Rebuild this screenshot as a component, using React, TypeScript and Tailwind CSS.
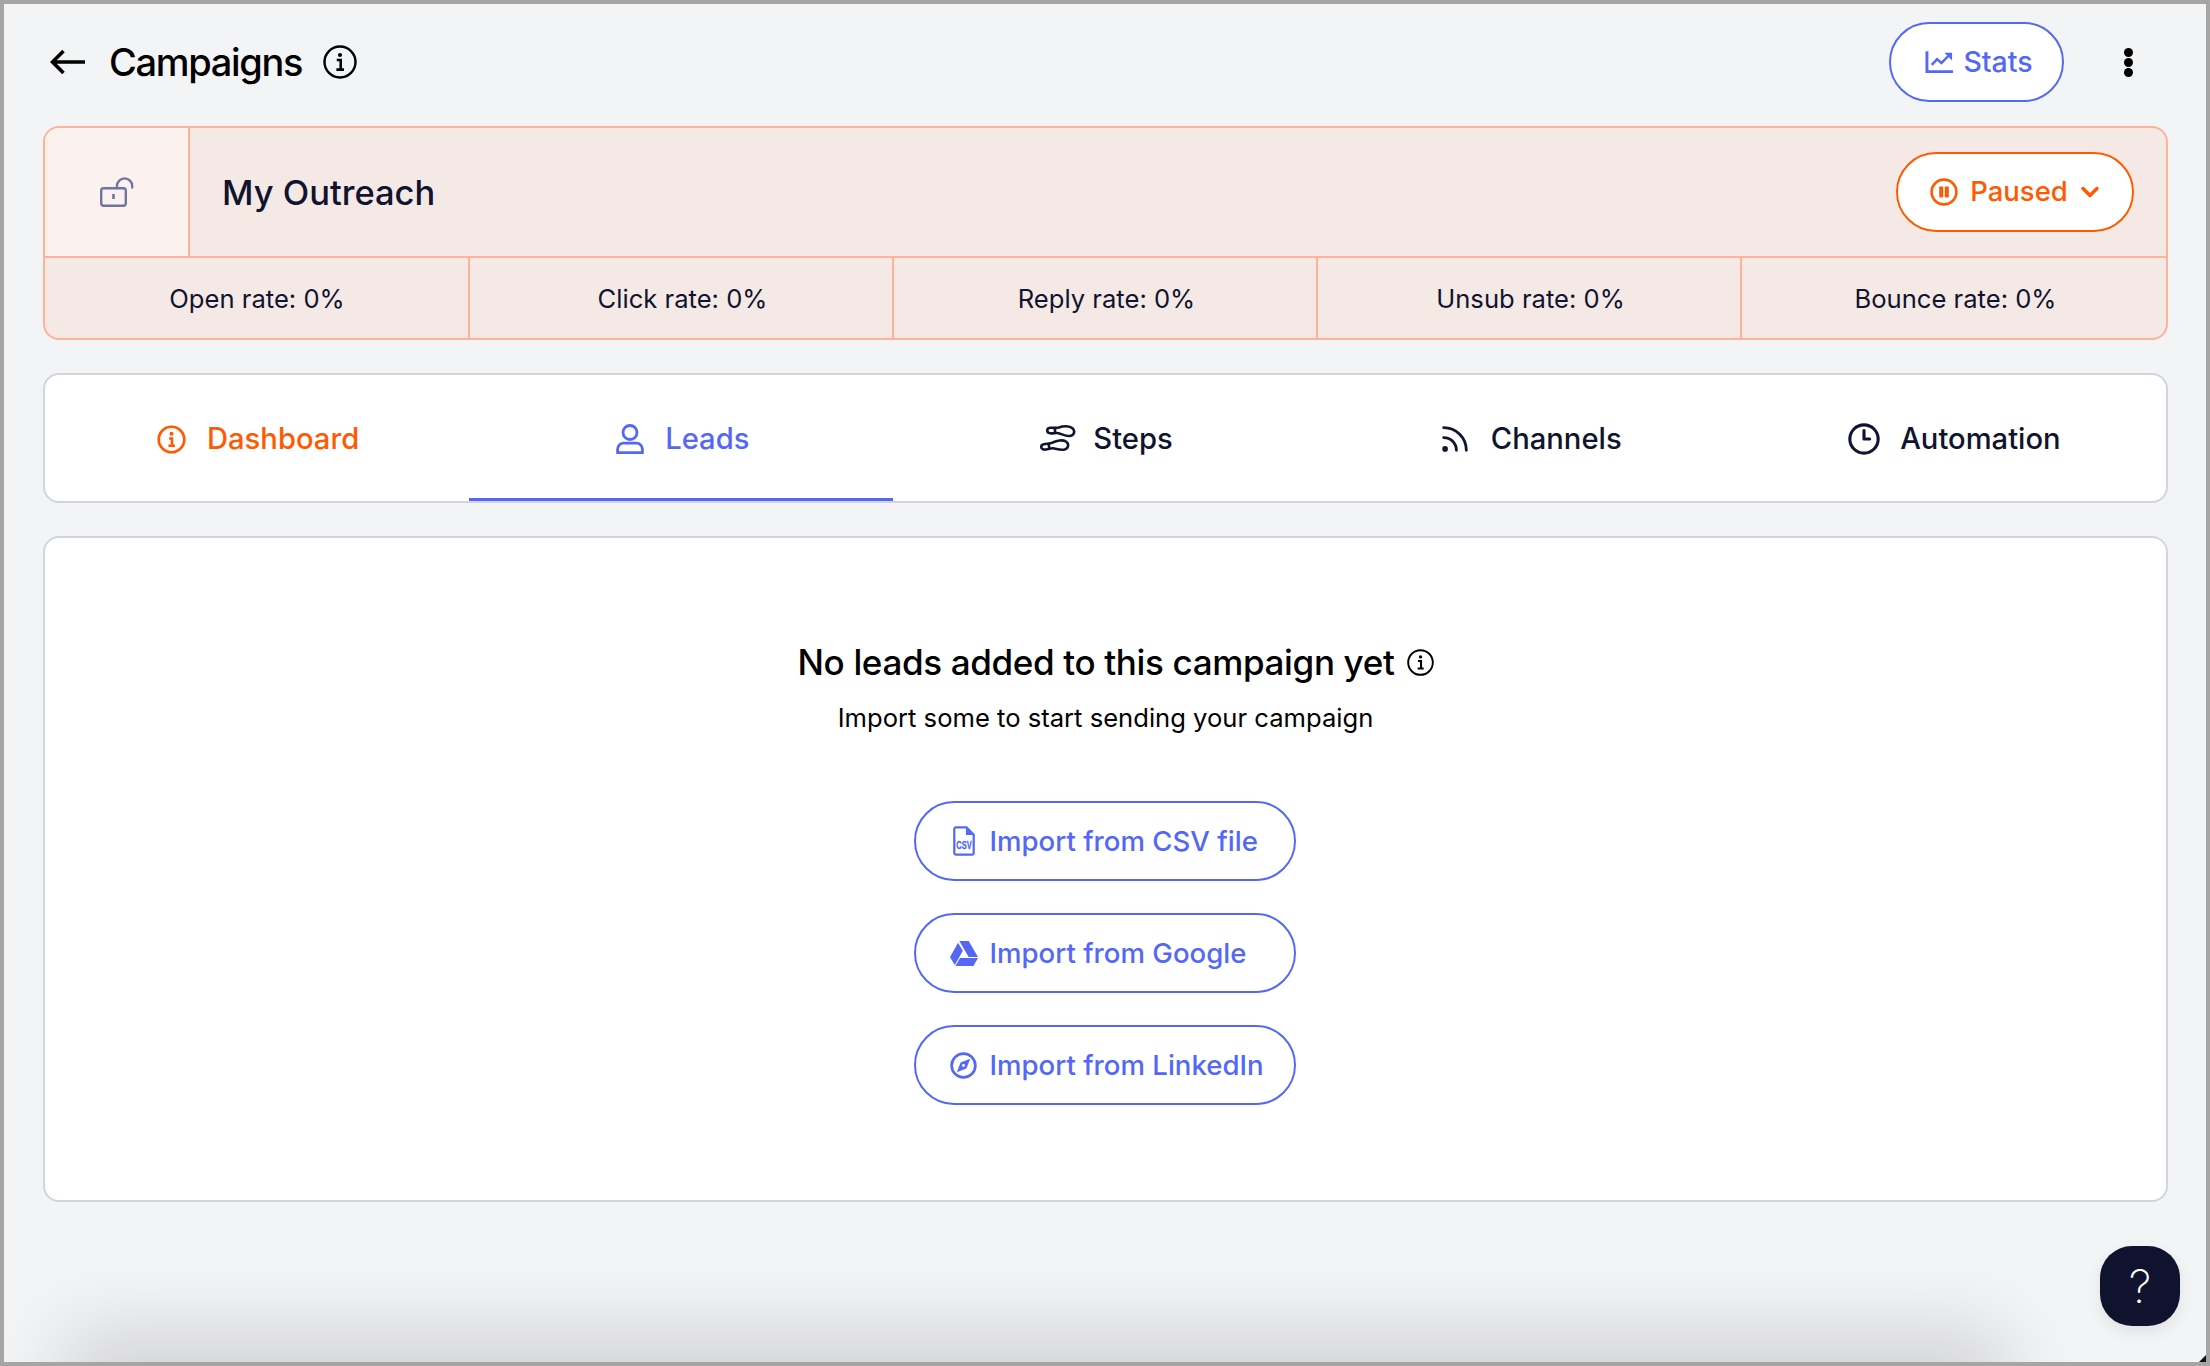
import { ChevronDown, Rss, Clock3 } from 'lucide-react';

function InfoSerif({ className }: { className?: string }) {
  return (
    <svg viewBox="0 0 34 34" fill="none" className={className}>
      <circle cx="17" cy="17" r="15.5" stroke="currentColor" strokeWidth="2.4" />
      <circle cx="17" cy="10" r="2.1" fill="currentColor" />
      <path d="M13.8 15h3.9v9.2M13.4 24.6h7.6" stroke="currentColor" strokeWidth="2.6" />
    </svg>
  );
}

function LockOpen() {
  return (
    <svg viewBox="0 0 34 30" fill="none" className="w-[34px] h-[30px] text-[#71749c]">
      <rect x="1.2" y="11.2" width="24.6" height="17.6" rx="2.5" stroke="currentColor" strokeWidth="2.4" />
      <path d="M13.5 17v5" stroke="currentColor" strokeWidth="2.6" />
      <path d="M17 11V9a7.6 7.6 0 0 1 15.2 0v1.5" stroke="currentColor" strokeWidth="2.4" strokeLinecap="round" />
    </svg>
  );
}

function ChartIcon() {
  return (
    <svg viewBox="0 0 30 24" fill="none" className="w-[29px] h-[24px]">
      <path d="M2 1v21h27" stroke="currentColor" strokeWidth="3" />
      <path d="M7 15l5.5-6 4.5 4 9-9" stroke="currentColor" strokeWidth="2.5" />
      <path d="M20 2.5h8v8z" fill="currentColor" />
    </svg>
  );
}

function PauseCircle() {
  return (
    <svg viewBox="0 0 28 28" fill="none" className="w-[28px] h-[28px]">
      <circle cx="14" cy="14" r="12.4" stroke="currentColor" strokeWidth="2.6" />
      <rect x="9.2" y="8.5" width="4" height="11" rx="0.8" fill="currentColor" />
      <rect x="14.8" y="8.5" width="4" height="11" rx="0.8" fill="currentColor" />
    </svg>
  );
}

function DashInfo() {
  return (
    <svg viewBox="0 0 30 30" fill="none" className="w-[29px] h-[29px]">
      <circle cx="15" cy="15" r="13.2" stroke="currentColor" strokeWidth="2.8" />
      <circle cx="15" cy="9" r="2.1" fill="currentColor" />
      <path d="M12.5 14h3v7M11.8 21.5h6.8" stroke="currentColor" strokeWidth="2.6" />
    </svg>
  );
}

function LeadsIcon() {
  return (
    <svg viewBox="0 0 28 30" fill="none" className="w-[28px] h-[30px]" stroke="currentColor" strokeWidth="2.8">
      <circle cx="14" cy="8.5" r="7" />
      <path d="M1.6 28.6v-3.4a6 6 0 0 1 6-6h12.8a6 6 0 0 1 6 6v3.4z" />
    </svg>
  );
}

const sole = 'M5.5 2.8C9 2.6 11.5 3.3 14.5 2.5C19 0.8 25 0.8 28 3.3C31 6 29.8 10.3 25.5 11C21 11.6 17.5 9 14 8.2C11 7.6 8.5 8.7 5.5 8.3C1.8 7.7 1.8 3.2 5.5 2.8Z';

function StepsIcon() {
  return (
    <svg viewBox="0 0 38 30" fill="none" className="w-[38px] h-[30px]" stroke="currentColor" strokeWidth="2.6">
      <g transform="translate(6.5 1)">
        <path d={sole} />
        <path d="M10.5 3v5" />
      </g>
      <g transform="translate(0.5 16) rotate(-8 15 6)">
        <path d={sole} />
        <path d="M10.5 3v5" />
      </g>
    </svg>
  );
}

function CsvIcon() {
  return (
    <svg viewBox="0 0 22 30" fill="none" className="w-[22px] h-[30px]">
      <path d="M3 1.3h10.5l7.2 7.4V27a1.7 1.7 0 0 1-1.7 1.7H3A1.7 1.7 0 0 1 1.3 27V3A1.7 1.7 0 0 1 3 1.3Z" stroke="currentColor" strokeWidth="2.2" />
      <path d="M13 1.5V9h7.5z" fill="currentColor" />
      <text x="11" y="23" textAnchor="middle" fontSize="10.5" fontWeight="700" fill="currentColor" stroke="currentColor" strokeWidth="0.3" fontFamily="'Liberation Sans', sans-serif" textLength="15.5" lengthAdjust="spacingAndGlyphs">CSV</text>
    </svg>
  );
}

function DriveIcon() {
  return (
    <svg viewBox="0 0 28 25" fill="currentColor" className="w-[28px] h-[25px]">
      <path d="M9.3 0h9.4l9.3 16h-9.4z" />
      <path d="M8 1.8l4.8 8L4.8 24 0 16.2z" />
      <path d="M10 17h18l-4.6 8H5.4z" />
    </svg>
  );
}

function CompassIcon() {
  return (
    <svg viewBox="0 0 28 28" fill="none" className="w-[27px] h-[27px]">
      <circle cx="14" cy="14" r="12.3" stroke="currentColor" strokeWidth="2.8" />
      <path d="M21 7L17 17 7 21 11 11Z" fill="currentColor" />
      <circle cx="14" cy="14" r="1.5" fill="#fff" />
    </svg>
  );
}

const rates = ['Open rate: 0%', 'Click rate: 0%', 'Reply rate: 0%', 'Unsub rate: 0%', 'Bounce rate: 0%'];

export default function App() {
  const imports = [
    { label: 'Import from CSV file', icon: <CsvIcon /> },
    { label: 'Import from Google', icon: <DriveIcon /> },
    { label: 'Import from LinkedIn', icon: <CompassIcon /> },
  ];

  return (
    <div className="relative w-[2210px] h-[1366px] overflow-hidden border-[4px] border-[#a5a5a5] bg-[#f3f4f6] font-['Inter',sans-serif] text-[#10142e] antialiased">
      {/* window shadow along the bottom edge */}
      <div className="absolute left-[90px] right-[230px] -bottom-[50px] h-[50px] shadow-[0_0_80px_30px_rgba(0,0,0,0.14)]" />

      <div className="relative flex flex-col pl-[39px] pr-[38px]">
        <div className="h-[122px] pb-[6px] flex items-center justify-between">
          <div className="flex items-center">
            <svg viewBox="0 0 36 26" fill="none" className="ml-[7px] w-[36px] h-[26px] text-black">
              <path d="M35 13H3M13.5 2L2.5 13l11 11" stroke="currentColor" strokeWidth="3.6" />
            </svg>
            <span className="ml-[23px] text-[38px] font-medium tracking-[-0.035em] text-black">Campaigns</span>
            <InfoSerif className="ml-[21px] w-[34px] h-[34px] text-black" />
          </div>
          <div className="flex items-center">
            <button className="h-[80px] w-[175px] pl-[5px] rounded-full border-2 border-[#5468f5] bg-white flex items-center justify-center gap-[9px] text-[28.5px] font-medium text-[#5468f5]">
              <ChartIcon />
              Stats
            </button>
            <div className="ml-[60px] mr-[35px] flex flex-col gap-[1px]">
              <span className="w-[9px] h-[9px] rounded-full bg-black" />
              <span className="w-[9px] h-[9px] rounded-full bg-black" />
              <span className="w-[9px] h-[9px] rounded-full bg-black" />
            </div>
          </div>
        </div>

        <div className="h-[214px] rounded-[16px] border-2 border-[#ffb199] bg-[#f5e9e5] overflow-hidden flex flex-col">
          <div className="h-[130px] flex items-center border-b-2 border-[#ffb199]">
            <div className="w-[145px] h-full bg-[#fbf2f0] border-r-2 border-[#ffb199] flex items-center justify-center">
              <LockOpen />
            </div>
            <span className="ml-[32px] mt-[2px] text-[34.5px] font-medium text-[#10142e]">My Outreach</span>
            <button className="ml-auto mr-[32px] h-[80px] w-[238px] pl-[4px] rounded-full border-2 border-[#ff5a00] bg-white flex items-center justify-center gap-[12px] text-[27.5px] font-medium text-[#ff5a00]">
              <PauseCircle />
              Paused
              <ChevronDown className="-ml-[4px] w-[28px] h-[28px]" strokeWidth={3} />
            </button>
          </div>
          <div className="flex-1 grid grid-cols-5 pl-[1px]">
            {rates.map((rate, i) => (
              <div key={rate} className={`flex items-center justify-center pt-[3px] text-[25.6px] ${i < 4 ? 'border-r-2 border-[#ffb199]' : ''} ${i > 0 ? 'pl-[3px]' : ''}`}>
                {rate}
              </div>
            ))}
          </div>
        </div>

        <div className="mt-[33px] h-[130px] pt-[2px] rounded-[16px] border-2 border-[#d1d5db] bg-white grid grid-cols-5 text-[29.2px] font-medium">
          <div className="pl-[2px] flex items-center justify-center gap-[21px] text-[#ff5a00]">
            <DashInfo />
            Dashboard
          </div>
          <div className="pl-[3px] flex items-center justify-center gap-[21px] text-[#5468f5] border-t-[3px] border-t-transparent border-b-[3px] border-b-[#5468f5]">
            <LeadsIcon />
            Leads
          </div>
          <div className="flex items-center justify-center gap-[17px]">
            <StepsIcon />
            Steps
          </div>
          <div className="flex items-center justify-center gap-[19px]">
            <Rss className="w-[34px] h-[34px]" strokeWidth={2} />
            Channels
          </div>
          <div className="flex items-center justify-center gap-[19px]">
            <Clock3 className="w-[34px] h-[34px]" strokeWidth={2.2} />
            Automation
          </div>
        </div>

        <div className="mt-[33px] h-[666px] rounded-[16px] border-2 border-[#d1d5db] bg-white flex flex-col items-center pt-[102px]">
          <div className="ml-[20px] flex items-center gap-[12px]">
            <h2 className="text-[35px] leading-[44px] font-medium tracking-[-0.01em] text-black">No leads added to this campaign yet</h2>
            <InfoSerif className="w-[27px] h-[27px] text-black" />
          </div>
          <p className="mt-[18px] text-[25.6px] leading-[32px] text-black">Import some to start sending your campaign</p>
          <div className="mt-[67px] -ml-[2px] flex flex-col gap-[32px]">
            {imports.map((imp) => (
              <button key={imp.label} className="h-[80px] w-[382px] rounded-full border-2 border-[#5468f5] flex items-center text-[27.6px] font-medium text-[#5468f5]">
                <span className="ml-[33px] w-[30px] flex justify-center">{imp.icon}</span>
                <span className="ml-[11px] pt-[2px]">{imp.label}</span>
              </button>
            ))}
          </div>
        </div>
      </div>

      <button className="absolute left-[2096px] top-[1242px] w-[80px] h-[80px] rounded-[32px] bg-[#0f132e] text-white text-[46px] font-extralight flex items-center justify-center shadow-[0_6px_16px_rgba(0,0,0,0.08)]">
        ?
      </button>
      <svg viewBox="0 0 7 7" className="absolute right-0 bottom-0 w-[7px] h-[7px]">
        <path d="M7 0v7H0z" fill="#111" />
      </svg>
    </div>
  );
}
